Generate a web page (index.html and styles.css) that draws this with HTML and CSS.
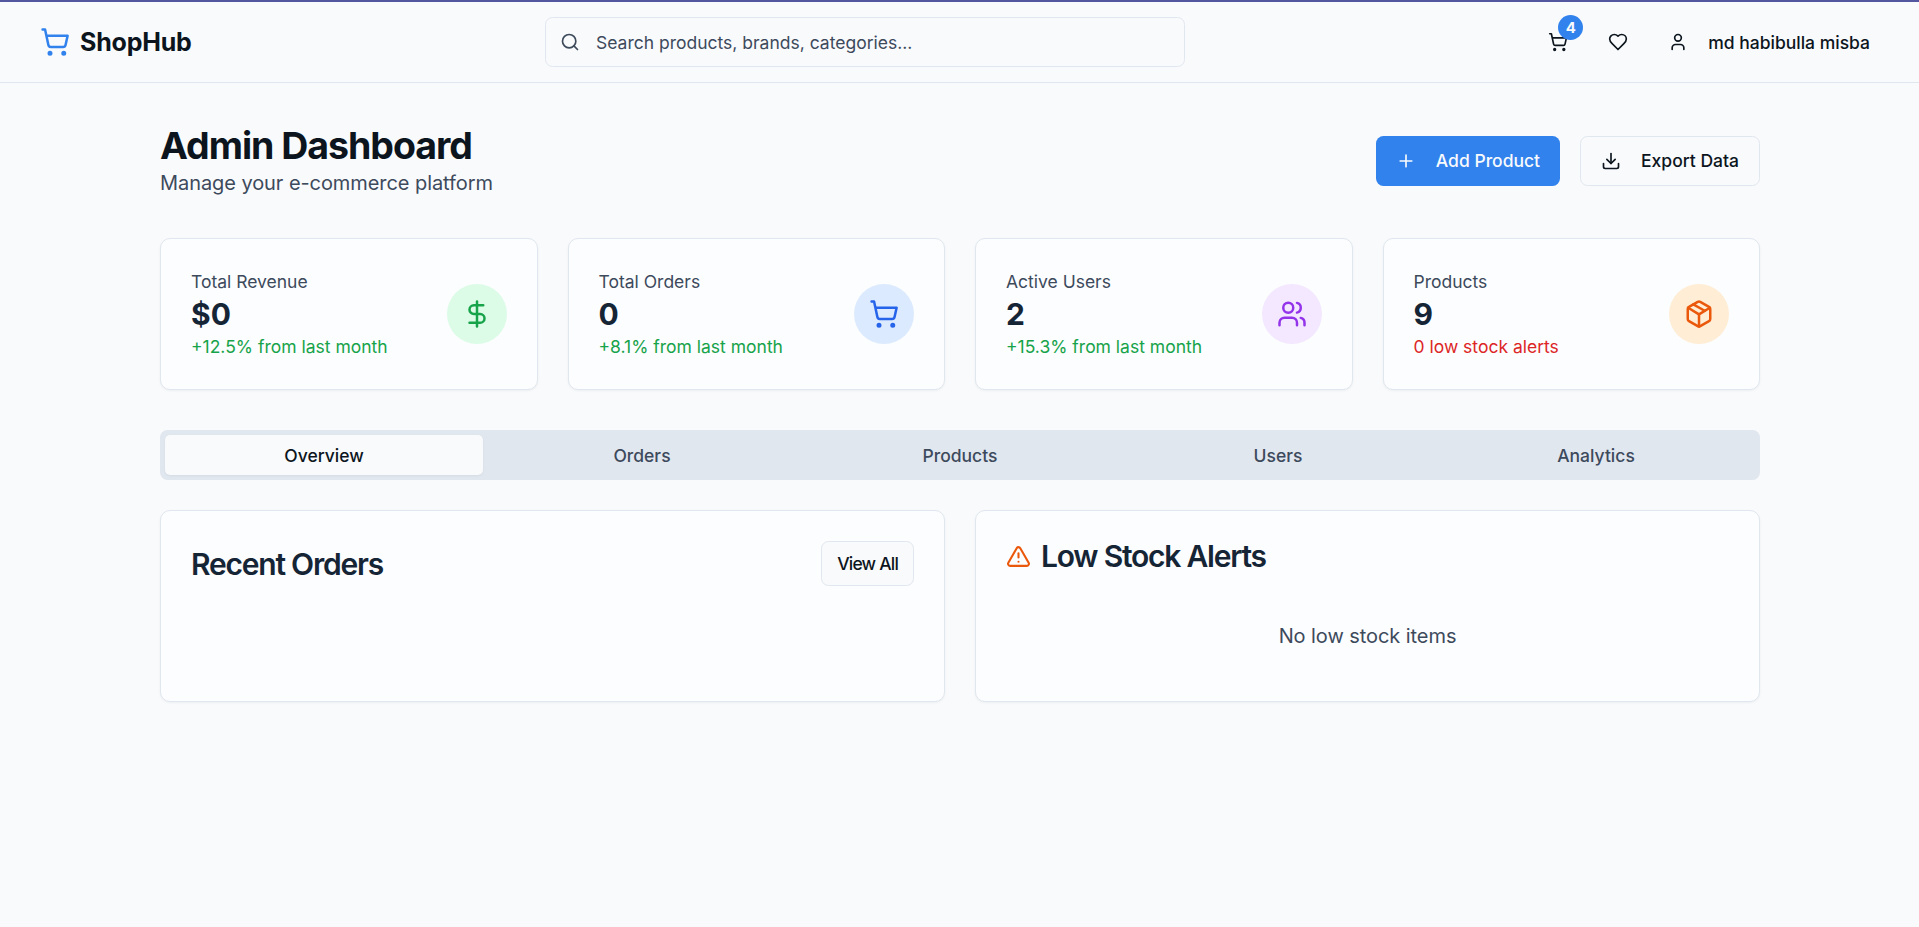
FILE: index.html
```html
<!DOCTYPE html>
<html lang="en">
<head>
<meta charset="utf-8">
<title>ShopHub - Admin Dashboard</title>
<link rel="stylesheet" href="styles.css">
</head>
<body>
<svg class="sprite" aria-hidden="true">
  <symbol id="cart" viewBox="0 0 24 24"><circle cx="8" cy="21" r="1"/><circle cx="19" cy="21" r="1"/><path d="M2.05 2.05h2l2.66 12.42a2 2 0 0 0 2 1.58h9.78a2 2 0 0 0 1.95-1.57l1.65-7.43H5.12"/></symbol>
</svg>
<header class="header">
  <a class="logo"><svg class="icon icon-lg"><use href="#cart"/></svg><span>ShopHub</span></a>
  <div class="search">
    <svg class="icon" viewBox="0 0 24 24"><circle cx="11" cy="11" r="8"/><path d="m21 21-4.3-4.3"/></svg>
    <span>Search products, brands, categories...</span>
  </div>
  <nav class="actions">
    <button class="ghost"><svg class="icon"><use href="#cart"/></svg><span class="badge">4</span></button>
    <button class="ghost"><svg class="icon" viewBox="0 0 24 24"><path d="M19 14c1.49-1.46 3-3.21 3-5.5A5.5 5.5 0 0 0 16.5 3c-1.76 0-3 .5-4.5 2-1.5-1.5-2.74-2-4.5-2A5.5 5.5 0 0 0 2 8.5c0 2.3 1.5 4.05 3 5.5l7 7Z"/></svg></button>
    <button class="ghost"><svg class="icon" viewBox="0 0 24 24"><path d="M19 21v-2a4 4 0 0 0-4-4H9a4 4 0 0 0-4 4v2"/><circle cx="12" cy="7" r="4"/></svg><span>md habibulla misba</span></button>
  </nav>
</header>
<main class="main">
  <section class="page-head">
    <div>
      <h1>Admin Dashboard</h1>
      <p class="subtitle">Manage your e-commerce platform</p>
    </div>
    <div class="page-actions">
      <button class="btn primary"><svg class="icon" viewBox="0 0 24 24"><path d="M5 12h14M12 5v14"/></svg>Add Product</button>
      <button class="btn outline"><svg class="icon" viewBox="0 0 24 24"><path d="M21 15v4a2 2 0 0 1-2 2H5a2 2 0 0 1-2-2v-4"/><path d="m7 10 5 5 5-5"/><path d="M12 15V3"/></svg>Export Data</button>
    </div>
  </section>

  <section class="stats">
    <article class="card stat">
      <div><p class="label">Total Revenue</p><p class="value">$0</p><p class="note up">+12.5% from last month</p></div>
      <div class="bubble green"><svg class="icon icon-lg" viewBox="0 0 24 24"><path d="M12 2v20"/><path d="M17 5H9.5a3.5 3.5 0 0 0 0 7h5a3.5 3.5 0 0 1 0 7H6"/></svg></div>
    </article>
    <article class="card stat">
      <div><p class="label">Total Orders</p><p class="value">0</p><p class="note up">+8.1% from last month</p></div>
      <div class="bubble blue"><svg class="icon icon-lg"><use href="#cart"/></svg></div>
    </article>
    <article class="card stat">
      <div><p class="label">Active Users</p><p class="value">2</p><p class="note up">+15.3% from last month</p></div>
      <div class="bubble purple"><svg class="icon icon-lg" viewBox="0 0 24 24"><path d="M16 21v-2a4 4 0 0 0-4-4H6a4 4 0 0 0-4 4v2"/><circle cx="9" cy="7" r="4"/><path d="M22 21v-2a4 4 0 0 0-3-3.87"/><path d="M16 3.13a4 4 0 0 1 0 7.75"/></svg></div>
    </article>
    <article class="card stat">
      <div><p class="label">Products</p><p class="value">9</p><p class="note down">0 low stock alerts</p></div>
      <div class="bubble orange"><svg class="icon icon-lg" viewBox="0 0 24 24"><path d="M11 21.73a2 2 0 0 0 2 0l7-4A2 2 0 0 0 21 16V8a2 2 0 0 0-1-1.73l-7-4a2 2 0 0 0-2 0l-7 4A2 2 0 0 0 3 8v8a2 2 0 0 0 1 1.73z"/><path d="M12 22V12"/><path d="m3.3 7 7.703 4.734a2 2 0 0 0 1.994 0L20.7 7"/><path d="m7.5 4.27 9 5.15"/></svg></div>
    </article>
  </section>

  <div class="tabs">
    <button class="tab active">Overview</button>
    <button class="tab">Orders</button>
    <button class="tab">Products</button>
    <button class="tab">Users</button>
    <button class="tab">Analytics</button>
  </div>

  <section class="panels">
    <article class="card panel">
      <h3 class="panel-title spread">Recent Orders<button class="view-all">View All</button></h3>
    </article>
    <article class="card panel">
      <h3 class="panel-title"><svg class="icon warning" viewBox="0 0 24 24"><path d="m21.73 18-8-14a2 2 0 0 0-3.48 0l-8 14A2 2 0 0 0 4 21h16a2 2 0 0 0 1.73-3"/><path d="M12 9v4"/><path d="M12 17h.01"/></svg>Low Stock Alerts</h3>
      <p class="empty">No low stock items</p>
    </article>
  </section>
</main>
</body>
</html>
```
FILE: styles.css
```css
:root {
  --bg: #f9fafc;
  --card: #fcfdfe;
  --border: #e1e7ef;
  --fg: #0c151d;
  --card-fg: #152536;
  --muted: #3d4a5c;
  --primary: #3182ed;
}
*, *::before, *::after { box-sizing: border-box; }
body {
  margin: 0;
  min-height: 100vh;
  border-top: 2px solid #5357a0;
  background: var(--bg);
  color: var(--fg);
  font: 400 20px/30px Inter, "Liberation Sans", sans-serif;
}
h1, h3, p { margin: 0; }
button {
  margin: 0;
  border: 0;
  background: none;
  color: inherit;
  font: 500 17.5px/25px Inter, "Liberation Sans", sans-serif;
  white-space: nowrap;
}
.sprite { display: none; }
.icon {
  flex: none;
  width: 20px;
  height: 20px;
  fill: none;
  stroke: currentColor;
  stroke-width: 2;
  stroke-linecap: round;
  stroke-linejoin: round;
}
.icon-lg { width: 30px; height: 30px; }

.header {
  display: grid;
  grid-template-columns: 505px 640px 1fr;
  align-items: center;
  height: 81px;
  padding: 0 34px 0 40px;
  border-bottom: 1px solid var(--border);
}
.logo {
  display: flex;
  align-items: center;
  gap: 10px;
  font-size: 25px;
  font-weight: 700;
  line-height: 35px;
  letter-spacing: -0.2px;
}
.logo .icon { color: var(--primary); }
.search {
  display: flex;
  align-items: center;
  gap: 16px;
  height: 50px;
  padding: 0 14px;
  border: 1px solid var(--border);
  border-radius: 7.5px;
  color: var(--muted);
  font-size: 17.5px;
  line-height: 25px;
}
.actions {
  display: flex;
  justify-content: flex-end;
  gap: 10px;
}
.ghost {
  position: relative;
  display: flex;
  align-items: center;
  gap: 20px;
  height: 45px;
  padding: 0 15px;
}
.badge {
  position: absolute;
  top: -5px;
  right: 0;
  width: 25px;
  height: 25px;
  border-radius: 50%;
  background: var(--primary);
  color: #f8fafc;
  font-size: 15px;
  font-weight: 700;
  text-align: center;
}

.main {
  margin: 0 159px 0 160px;
  padding: 40px 0;
}
.page-head {
  display: flex;
  align-items: center;
  justify-content: space-between;
  margin-bottom: 40px;
}
h1 {
  font-size: 37.5px;
  font-weight: 700;
  line-height: 45px;
  letter-spacing: -1.03px;
}
.subtitle, .empty { color: var(--muted); letter-spacing: -0.07px; }
.page-actions { display: flex; gap: 20px; }
.btn {
  display: flex;
  align-items: center;
  gap: 20px;
  height: 50px;
  padding: 0 20px;
  border-radius: 7.5px;
}
.primary { background: var(--primary); color: #f8fafc; }
.outline { border: 1px solid var(--border); background: var(--bg); }

.card {
  border: 1px solid var(--border);
  border-radius: 10px;
  background: var(--card);
  color: var(--card-fg);
  box-shadow: 0 1px 2.5px rgba(0, 0, 0, 0.05);
}
.stats {
  display: grid;
  grid-template-columns: repeat(4, 1fr);
  gap: 30px;
  margin-bottom: 40px;
}
.stat {
  display: flex;
  align-items: center;
  justify-content: space-between;
  padding: 30px;
}
.label, .note { font-size: 17.5px; line-height: 25px; }
.label { color: var(--muted); }
.value { font-size: 30px; font-weight: 700; line-height: 40px; }
.up { color: #16a34a; }
.down { color: #dc2626; }
.bubble {
  display: grid;
  place-items: center;
  width: 60px;
  height: 60px;
  border-radius: 50%;
}
.green { background: #dcfce7; color: #16a34a; }
.blue { background: #dbeafe; color: #2563eb; }
.purple { background: #f3e8ff; color: #9333ea; }
.orange { background: #ffedd5; color: #ea580c; }

.tabs {
  display: grid;
  grid-template-columns: repeat(5, 1fr);
  height: 50px;
  margin-bottom: 30px;
  padding: 5px;
  border-radius: 7.5px;
  background: var(--border);
  color: var(--muted);
}
.tab { border-radius: 5px; }
.active {
  background: var(--bg);
  color: var(--fg);
  box-shadow: 0 1px 2.5px rgba(0, 0, 0, 0.05);
}

.panels {
  display: grid;
  grid-template-columns: 1fr 1fr;
  gap: 30px;
}
.panel { height: 192px; padding: 30px; }
.panel-title {
  display: flex;
  align-items: center;
  gap: 10px;
  font-size: 30px;
  font-weight: 600;
  line-height: 30px;
  letter-spacing: -1.22px;
}
.spread { justify-content: space-between; }
.warning { width: 25px; height: 25px; color: #ea580c; }
.view-all {
  height: 45px;
  padding: 0 15px;
  border: 1px solid var(--border);
  border-radius: 7.5px;
  background: var(--bg);
  color: var(--fg);
  letter-spacing: -0.8px;
}
.empty { padding-top: 50px; text-align: center; }
```
